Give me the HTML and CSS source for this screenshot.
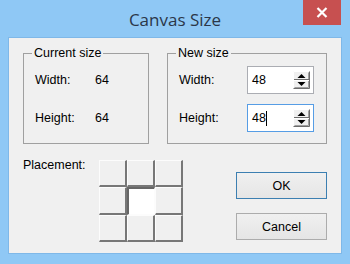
FILE: index.html
```html
<!DOCTYPE html>
<html>
<head>
    <title>Canvas Size</title>
    <link rel="stylesheet" href="styles.css">
</head>
<body>
    <div class="window">
        <div class="titlebar">
            <span></span>
            <h1 class="title">Canvas Size</h1>
            <button class="close">
                <svg width="12" height="11" viewBox="0 0 12 11">
                    <path d="M1.5 1 L10.5 10 M10.5 1 L1.5 10" stroke="#fff" stroke-width="2.2" fill="none"/>
                </svg>
            </button>
        </div>

        <div class="client">
            <div class="groups">
                <fieldset class="group current">
                    <legend>Current size</legend>
                    <div class="field-grid">
                        <span>Width:</span><span>64</span>
                        <span>Height:</span><span>64</span>
                    </div>
                </fieldset>

                <fieldset class="group new">
                    <legend>New size</legend>
                    <div class="field-grid">
                        <span>Width:</span>
                        <div class="spin-input">
                            <span class="value">48</span>
                            <svg class="spinner" width="17" height="18" viewBox="0 0 17 18">
                                <rect x="0" y="0" width="17" height="18" fill="#f0f0f0"/>
                                <path d="M0.5 17.5 V0.5 H16.5" stroke="#fff" fill="none"/>
                                <path d="M0.5 17.5 H16.5 V0.5" stroke="#6d6d6d" fill="none"/>
                                <path d="M1.5 16.5 H15.5 V1.5" stroke="#a0a0a0" fill="none"/>
                                <path d="M1 8.5 H16" stroke="#6d6d6d"/>
                                <path d="M1 9.5 H16" stroke="#fff"/>
                                <path d="M4.5 7 L12.5 7 L8.5 3 Z" fill="#000"/>
                                <path d="M4.5 11 L12.5 11 L8.5 15 Z" fill="#000"/>
                            </svg>
                        </div>
                        <span>Height:</span>
                        <div class="spin-input focused">
                            <span class="value">48<span class="caret"></span></span>
                            <svg class="spinner" width="17" height="18" viewBox="0 0 17 18">
                                <rect x="0" y="0" width="17" height="18" fill="#f0f0f0"/>
                                <path d="M0.5 17.5 V0.5 H16.5" stroke="#fff" fill="none"/>
                                <path d="M0.5 17.5 H16.5 V0.5" stroke="#6d6d6d" fill="none"/>
                                <path d="M1.5 16.5 H15.5 V1.5" stroke="#a0a0a0" fill="none"/>
                                <path d="M1 8.5 H16" stroke="#6d6d6d"/>
                                <path d="M1 9.5 H16" stroke="#fff"/>
                                <path d="M4.5 7 L12.5 7 L8.5 3 Z" fill="#000"/>
                                <path d="M4.5 11 L12.5 11 L8.5 15 Z" fill="#000"/>
                            </svg>
                        </div>
                    </div>
                </fieldset>
            </div>

            <div class="bottom">
                <span class="placement-label">Placement:</span>
                <div class="placement-grid">
                    <button class="cell"></button>
                    <button class="cell"></button>
                    <button class="cell"></button>
                    <button class="cell"></button>
                    <button class="cell selected"></button>
                    <button class="cell"></button>
                    <button class="cell"></button>
                    <button class="cell"></button>
                    <button class="cell"></button>
                </div>
                <div class="actions">
                    <button class="btn default">OK</button>
                    <button class="btn">Cancel</button>
                </div>
            </div>
        </div>
    </div>
</body>
</html>
```

FILE: styles.css
```css
:root {
    --frame-color: #8fc8f5;
    --face-color: #f0f0f0;
    --text-color: #000000;
}

body {
    margin: 0;
    font-family: "Liberation Sans", Arial, sans-serif;
    font-size: 12.5px;
    color: var(--text-color);
}

.window {
    width: 350px;
    height: 264px;
    background: var(--frame-color);
    display: flex;
    flex-direction: column;
    overflow: hidden;
}

.titlebar {
    height: 37px;
    display: grid;
    grid-template-columns: 1fr auto 1fr;
    align-items: start;
}

.title {
    margin: 0;
    padding-top: 8px;
    font-family: "Open Sans", "Noto Sans", sans-serif;
    font-size: 17px;
    font-weight: normal;
    line-height: 24px;
    color: #2b3749;
}

.close {
    justify-self: end;
    margin-right: 9px;
    width: 38px;
    height: 25px;
    padding: 0;
    border: none;
    background: #c75050;
    display: flex;
    align-items: center;
    justify-content: center;
}

.client {
    margin: 0 8px;
    height: 217px;
    box-sizing: border-box;
    border: 1px solid #7fb8e8;
    background: var(--face-color);
    padding: 8px 14px 0 14px;
}

.groups {
    display: flex;
    gap: 18px;
}

.group {
    margin: 0;
    min-width: 0;
    box-sizing: border-box;
    padding: 6px 0 11px 11px;
    border: 1px solid #a0a0a0;
}

.group legend {
    margin-left: -3px;
    padding: 0 2px;
    line-height: 14px;
}

.current {
    width: 126px;
}

.new {
    width: 160px;
}

.field-grid {
    display: grid;
    grid-auto-rows: 28px;
    row-gap: 10px;
    align-items: center;
}

.current .field-grid {
    grid-template-columns: 60px auto;
}

.new .field-grid {
    grid-template-columns: 68px auto;
}

.spin-input {
    width: 67px;
    height: 28px;
    box-sizing: border-box;
    border: 1px solid #abadb3;
    background: #fff;
    display: flex;
    align-items: center;
    padding-left: 4px;
}

.spin-input.focused {
    border-color: #569de5;
}

.spin-input .value {
    display: flex;
    align-items: center;
}

.caret {
    display: inline-block;
    width: 1px;
    height: 15px;
    background: #000;
}

.spinner {
    margin-left: auto;
    margin-right: 3px;
}

.bottom {
    margin-top: 13px;
    display: flex;
    align-items: flex-start;
}

.placement-label {
    width: 76px;
    line-height: 14px;
    margin-top: 1px;
}

.placement-grid {
    margin-top: 3px;
    display: grid;
    grid-template-columns: repeat(3, 28px);
    grid-template-rows: 27px 28px 27px;
}

.cell {
    padding: 0;
    background: var(--face-color);
    border-style: solid;
    border-width: 1px 2px 2px 1px;
    border-color: #fcfcfc #777 #777 #fcfcfc;
}

.cell.selected {
    background: #fff;
    border-width: 2px 1px 1px 2px;
    border-color: #666 #fcfcfc #fcfcfc #666;
}

.actions {
    margin-left: auto;
    margin-top: 15px;
    display: flex;
    flex-direction: column;
    gap: 14px;
}

.btn {
    width: 91px;
    height: 27px;
    padding: 0;
    background: linear-gradient(#f0f0f0, #e5e5e5);
    border: 1px solid #acacac;
    font-family: "Liberation Sans", Arial, sans-serif;
    font-size: 12.5px;
    color: var(--text-color);
}

.btn.default {
    border-color: #3c7fb1;
}
```
